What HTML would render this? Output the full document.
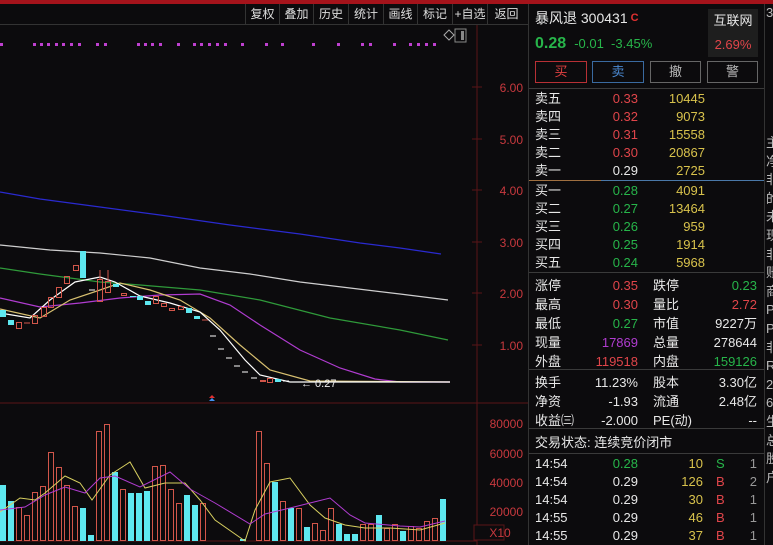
<!DOCTYPE html>
<html><head><meta charset="utf-8"><style>
*{margin:0;padding:0;box-sizing:border-box}
body{width:773px;height:545px;background:#0c0b0d;overflow:hidden;position:relative;font-family:"Liberation Sans","Noto Sans CJK SC",sans-serif;color:#ddd}
.a{position:absolute;white-space:nowrap;font-size:13px;line-height:16px}
.r{text-align:right}
.red{color:#e0454a}.grn{color:#27b54a}.yel{color:#d8c24c}.wht{color:#e8e8e8}.pur{color:#b03cd0}
.tb{position:absolute;top:4px;height:21px;font-size:12px;line-height:20px;color:#ddd;text-align:center;border-left:1px solid #333}
.ln{position:absolute;height:1px;background:#3a3a3a}
.btn{position:absolute;top:61px;height:22px;border:1px solid #666;font-size:13px;line-height:20px;text-align:center;color:#bbb}
</style></head><body>
<div style="position:absolute;left:0;top:0;width:773px;height:4px;background:#a4131b"></div>
<div style="position:absolute;left:0;top:24px;width:528px;height:1px;background:#333"></div>
<div class="tb" style="left:245px;width:34px">复权</div>
<div class="tb" style="left:279px;width:34px">叠加</div>
<div class="tb" style="left:313px;width:35px">历史</div>
<div class="tb" style="left:348px;width:35px">统计</div>
<div class="tb" style="left:383px;width:34px">画线</div>
<div class="tb" style="left:417px;width:35px">标记</div>
<div class="tb" style="left:452px;width:35px">+自选</div>
<div class="tb" style="left:487px;width:38px">返回</div>

<svg width="528" height="545" style="position:absolute;left:0;top:0">
<g fill="none" stroke-width="1">
<line x1="477" y1="25" x2="477" y2="545" stroke="#5a1418"/>
<line x1="0" y1="403" x2="528" y2="403" stroke="#5a1418"/>
<line x1="0" y1="541" x2="477" y2="541" stroke="#5a1418"/>
<g stroke="#5a1418"><line x1="472" y1="87" x2="482" y2="87"/><line x1="472" y1="139" x2="482" y2="139"/><line x1="472" y1="190" x2="482" y2="190"/><line x1="472" y1="242" x2="482" y2="242"/><line x1="472" y1="293" x2="482" y2="293"/><line x1="472" y1="345" x2="482" y2="345"/></g>
<rect x="455" y="29" width="11" height="13" stroke="#888"/>
<rect x="461" y="31" width="3" height="9" fill="#888" stroke="none"/>
<path d="M449 30 L454 35 L449 40 L444 35 Z" stroke="#aaa"/>
</g>
<g fill="#c040d0">
<rect x="0" y="43" width="3" height="3"/>
<rect x="33" y="43" width="3" height="3"/><rect x="40" y="43" width="3" height="3"/><rect x="47" y="43" width="3" height="3"/><rect x="55" y="43" width="3" height="3"/><rect x="62" y="43" width="3" height="3"/><rect x="70" y="43" width="3" height="3"/><rect x="78" y="43" width="3" height="3"/>
<rect x="96" y="43" width="3" height="3"/><rect x="104" y="43" width="3" height="3"/>
<rect x="137" y="43" width="3" height="3"/><rect x="144" y="43" width="3" height="3"/><rect x="151" y="43" width="3" height="3"/><rect x="159" y="43" width="3" height="3"/><rect x="177" y="43" width="3" height="3"/>
<rect x="193" y="43" width="3" height="3"/><rect x="200" y="43" width="3" height="3"/><rect x="208" y="43" width="3" height="3"/><rect x="216" y="43" width="3" height="3"/><rect x="224" y="43" width="3" height="3"/>
<rect x="241" y="43" width="3" height="3"/><rect x="265" y="43" width="3" height="3"/><rect x="281" y="43" width="3" height="3"/>
<rect x="312" y="43" width="3" height="3"/><rect x="337" y="43" width="3" height="3"/><rect x="361" y="43" width="3" height="3"/><rect x="369" y="43" width="3" height="3"/>
<rect x="393" y="43" width="3" height="3"/><rect x="409" y="43" width="3" height="3"/><rect x="417" y="43" width="3" height="3"/><rect x="425" y="43" width="3" height="3"/><rect x="433" y="43" width="3" height="3"/>
</g>
<g fill="none" stroke-width="1.2">
<polyline stroke="#2a2ad0" points="0,192 40,199 100,207 160,215 230,225 300,234 360,243 400,248 441,254"/>
<polyline stroke="#cfcfcf" points="0,245 50,250 100,253 150,258 200,268 250,274 300,282 350,288 400,294 448,300"/>
<polyline stroke="#2f9a3a" points="0,268 40,274 100,282 140,285 200,290 260,300 330,318 400,330 448,340"/>
<polyline stroke="#b03cd0" points="0,298 40,307 80,303 120,298 160,295 200,294 230,305 260,325 300,350 340,368 375,379 400,382 450,382"/>
<polyline stroke="#d8c070" points="0,309 40,318 70,300 100,290 120,283 150,290 180,300 210,318 240,345 270,370 310,381 450,382"/>
<polyline stroke="#ffffff" points="0,313 30,318 50,300 75,282 100,277 115,282 140,296 170,303 200,312 220,330 245,360 260,375 290,382 450,382"/>
</g>
<g fill="#5ee8f0">
<rect x="0" y="310" width="6" height="7"/><rect x="8" y="320" width="6" height="5"/><rect x="80" y="251" width="6" height="27"/>
<rect x="113" y="284" width="6" height="3"/><rect x="137" y="296" width="6" height="4"/><rect x="145" y="301" width="6" height="4"/>
<rect x="186" y="308" width="6" height="5"/><rect x="194" y="316" width="6" height="3"/><rect x="275" y="379" width="6" height="3"/>
<rect x="130" y="296" width="6" height="1"/>
</g>
<g fill="none" stroke="#d2564a">
<rect x="16.5" y="322.5" width="5" height="6"/><rect x="32.5" y="315.5" width="5" height="8"/><rect x="41.5" y="307.5" width="5" height="9"/>
<rect x="48.5" y="297.5" width="5" height="10"/><rect x="56.5" y="287.5" width="5" height="10"/><rect x="64.5" y="276.5" width="5" height="7"/>
<rect x="73.5" y="265.5" width="5" height="5"/><rect x="97.5" y="279.5" width="5" height="22"/><rect x="105.5" y="281.5" width="5" height="11"/>
<rect x="121.5" y="293.5" width="5" height="2"/><rect x="153.5" y="296.5" width="5" height="7"/><rect x="161.5" y="303.5" width="5" height="3"/>
<rect x="169.5" y="308.5" width="5" height="2"/><rect x="178.5" y="306.5" width="5" height="3"/><rect x="260.5" y="380.5" width="5" height="1"/><rect x="267.5" y="378.5" width="5" height="4"/>
<line x1="100" y1="270" x2="100" y2="279"/><line x1="108" y1="270" x2="108" y2="281"/><line x1="24" y1="323" x2="30" y2="323"/><line x1="202" y1="320" x2="208" y2="320"/>
</g>
<g stroke="#fff"><line x1="89" y1="290" x2="95" y2="290"/><line x1="210" y1="336" x2="216" y2="336"/><line x1="218" y1="349" x2="224" y2="349"/><line x1="226" y1="358" x2="232" y2="358"/><line x1="234" y1="366" x2="240" y2="366"/><line x1="242" y1="372" x2="248" y2="372"/><line x1="251" y1="378" x2="257" y2="378"/><line x1="283" y1="381" x2="289" y2="381"/></g>
<text x="301" y="387" fill="#eee" font-size="11" font-family="Liberation Sans">← 0.27</text>
<path d="M209 398 L212 395 L215 398 Z" fill="#e03030"/><path d="M209 401 L212 398 L215 401 Z" fill="#4090f0"/>
<g fill="#5ee8f0">
<rect x="0" y="485" width="6" height="56"/><rect x="8" y="501" width="6" height="40"/><rect x="80" y="508" width="6" height="33"/><rect x="88" y="535" width="6" height="6"/>
<rect x="112" y="472" width="6" height="69"/><rect x="128" y="493" width="6" height="48"/><rect x="136" y="493" width="6" height="48"/><rect x="144" y="491" width="6" height="50"/>
<rect x="184" y="495" width="6" height="46"/><rect x="192" y="505" width="6" height="36"/><rect x="240" y="539" width="6" height="2"/>
<rect x="272" y="482" width="6" height="59"/><rect x="288" y="508" width="6" height="33"/><rect x="304" y="527" width="6" height="14"/><rect x="336" y="524" width="6" height="17"/>
<rect x="344" y="534" width="6" height="7"/><rect x="352" y="534" width="6" height="7"/><rect x="376" y="515" width="6" height="26"/><rect x="400" y="531" width="6" height="10"/><rect x="440" y="499" width="6" height="42"/>
</g>
<g fill="none" stroke="#d2564a">
<rect x="16.5" y="507.5" width="5" height="33"/><rect x="24.5" y="515.5" width="5" height="25"/><rect x="32.5" y="492.5" width="5" height="48"/><rect x="40.5" y="486.5" width="5" height="54"/>
<rect x="48.5" y="452.5" width="5" height="88"/><rect x="56.5" y="467.5" width="5" height="73"/><rect x="64.5" y="485.5" width="5" height="55"/><rect x="72.5" y="506.5" width="5" height="34"/>
<rect x="96.5" y="431.5" width="5" height="109"/><rect x="104.5" y="424.5" width="5" height="116"/><rect x="120.5" y="489.5" width="5" height="51"/>
<rect x="152.5" y="466.5" width="5" height="74"/><rect x="160.5" y="465.5" width="5" height="75"/><rect x="168.5" y="489.5" width="5" height="51"/><rect x="176.5" y="503.5" width="5" height="37"/><rect x="200.5" y="503.5" width="5" height="37"/>
<rect x="256.5" y="431.5" width="5" height="109"/><rect x="264.5" y="463.5" width="5" height="77"/><rect x="280.5" y="501.5" width="5" height="39"/><rect x="296.5" y="508.5" width="5" height="32"/>
<rect x="312.5" y="523.5" width="5" height="17"/><rect x="320.5" y="530.5" width="5" height="10"/><rect x="328.5" y="508.5" width="5" height="32"/><rect x="360.5" y="524.5" width="5" height="16"/><rect x="368.5" y="524.5" width="5" height="16"/>
<rect x="384.5" y="528.5" width="5" height="12"/><rect x="392.5" y="524.5" width="5" height="16"/><rect x="408.5" y="526.5" width="5" height="14"/><rect x="416.5" y="528.5" width="5" height="12"/><rect x="424.5" y="521.5" width="5" height="19"/><rect x="432.5" y="518.5" width="5" height="22"/>
</g>
<g fill="none" stroke-width="1">
<polyline stroke="#d8d060" points="0,512 20,498 35,500 45,493 65,476 80,483 92,500 110,475 130,462 145,488 165,483 185,483 200,500 215,520 245,541 255,510 270,482 290,478 310,505 325,518 345,525 365,528 390,528 420,530 445,523"/>
<polyline stroke="#b03cd0" points="0,510 25,507 45,495 65,487 85,493 100,478 115,476 140,487 170,472 190,489 215,503 250,524 265,514 290,508 310,503 330,498 350,515 365,523 400,526 420,527 445,521"/>
</g>
<rect x="474" y="525" width="30" height="15" fill="#0c0b0d" stroke="#5a1418"/>
<g fill="#c9393e" font-size="12" font-family="Liberation Sans" text-anchor="end">
<text x="523" y="92">6.00</text><text x="523" y="144">5.00</text><text x="523" y="195">4.00</text><text x="523" y="247">3.00</text><text x="523" y="298">2.00</text><text x="523" y="350">1.00</text>
<text x="523" y="428">80000</text><text x="523" y="458">60000</text><text x="523" y="487">40000</text><text x="523" y="516">20000</text><text x="500" y="537" text-anchor="middle">X10</text>
</g>
</svg>

<div style="position:absolute;left:528px;top:4px;width:1px;height:541px;background:#333"></div>
<div style="position:absolute;left:764px;top:4px;width:1px;height:541px;background:#333"></div>
<div class="a wht" style="left:535px;top:9px;font-size:14px;line-height:18px">暴风退 300431<span style="color:#e03030;font-size:11px;font-weight:bold;vertical-align:top;margin-left:3px">C</span></div>
<div class="a grn" style="left:535px;top:34px;font-size:16px;line-height:20px"><b>0.28</b> <span style="font-size:13px">&nbsp;-0.01 &nbsp;-3.45%</span></div>
<div style="position:absolute;left:708px;top:9px;width:50px;height:48px;background:#1e1e1e"></div>
<div class="a wht" style="left:708px;top:13px;width:50px;text-align:center">互联网</div>
<div class="a red" style="left:708px;top:37px;width:50px;text-align:center">2.69%</div>
<div class="btn" style="left:535px;width:52px;border-color:#b83035;color:#e04040">买</div>
<div class="btn" style="left:592px;width:52px;border-color:#3a6aa0;color:#4a88d0">卖</div>
<div class="btn" style="left:650px;width:51px">撤</div>
<div class="btn" style="left:707px;width:51px">警</div>
<div class="ln" style="left:529px;top:88px;width:235px"></div>

<div class="a wht" style="left:535px;top:90px;line-height:18px">卖五<br>卖四<br>卖三<br>卖二<br>卖一</div>
<div class="a r" style="left:580px;top:90px;width:58px;line-height:18px"><span class="red">0.33<br>0.32<br>0.31<br>0.30<br></span><span class="wht">0.29</span></div>
<div class="a r yel" style="left:640px;top:90px;width:65px;line-height:18px">10445<br>9073<br>15558<br>20867<br>2725</div>
<div style="position:absolute;left:529px;top:180px;width:72px;height:1px;background:#a07040"></div>
<div style="position:absolute;left:601px;top:180px;width:163px;height:1px;background:#4a78a8"></div>
<div class="a wht" style="left:535px;top:182px;line-height:18px">买一<br>买二<br>买三<br>买四<br>买五</div>
<div class="a r grn" style="left:580px;top:182px;width:58px;line-height:18px">0.28<br>0.27<br>0.26<br>0.25<br>0.24</div>
<div class="a r yel" style="left:640px;top:182px;width:65px;line-height:18px">4091<br>13464<br>959<br>1914<br>5968</div>
<div class="ln" style="left:529px;top:272px;width:235px"></div>

<div class="a wht" style="left:535px;top:276px;line-height:19px">涨停<br>最高<br>最低<br>现量<br>外盘</div>
<div class="a r" style="left:570px;top:276px;width:68px;line-height:19px"><span class="red">0.35<br>0.30</span><br><span class="grn">0.27</span><br><span class="pur">17869</span><br><span class="red">119518</span></div>
<div class="a wht" style="left:653px;top:276px;line-height:19px">跌停<br>量比<br>市值<br>总量<br>内盘</div>
<div class="a r" style="left:690px;top:276px;width:67px;line-height:19px"><span class="grn">0.23</span><br><span class="red">2.72</span><br><span class="wht">9227万<br>278644</span><br><span class="grn">159126</span></div>
<div class="ln" style="left:529px;top:369px;width:235px"></div>
<div class="a wht" style="left:535px;top:373px;line-height:19px">换手<br>净资<br>收益㈢</div>
<div class="a r wht" style="left:570px;top:373px;width:68px;line-height:19px">11.23%<br>-1.93<br>-2.000</div>
<div class="a wht" style="left:653px;top:373px;line-height:19px">股本<br>流通<br>PE(动)</div>
<div class="a r wht" style="left:690px;top:373px;width:67px;line-height:19px">3.30亿<br>2.48亿<br>--</div>
<div class="ln" style="left:529px;top:428px;width:235px"></div>
<div class="a wht" style="left:535px;top:435px">交易状态: 连续竞价闭市</div>
<div class="ln" style="left:529px;top:453px;width:235px"></div>
<div class="a wht" style="left:535px;top:455px;line-height:18px">14:54<br>14:54<br>14:54<br>14:55<br>14:55</div>
<div class="a r" style="left:580px;top:455px;width:58px;line-height:18px"><span class="grn">0.28</span><br><span class="wht">0.29<br>0.29<br>0.29<br>0.29</span></div>
<div class="a r yel" style="left:650px;top:455px;width:53px;line-height:18px">10<br>126<br>30<br>46<br>37</div>
<div class="a" style="left:716px;top:455px;line-height:18px"><span class="grn">S</span><br><span class="red">B<br>B<br>B<br>B</span></div>
<div class="a r" style="left:740px;top:455px;width:17px;line-height:18px;color:#999">1<br>2<br>1<br>1<br>1</div>

<div class="a" style="left:766px;top:4px;width:7px;overflow:hidden;color:#bbb;line-height:18.6px"><span style="display:block;height:130px">3</span>主<br>净<br>非<br>的<br>未<br>现<br>非<br>账<br>商<br>P<br>P<br>非<br>R<br>2<br>6<br>生<br>总<br>股<br>户</div>
</body></html>
